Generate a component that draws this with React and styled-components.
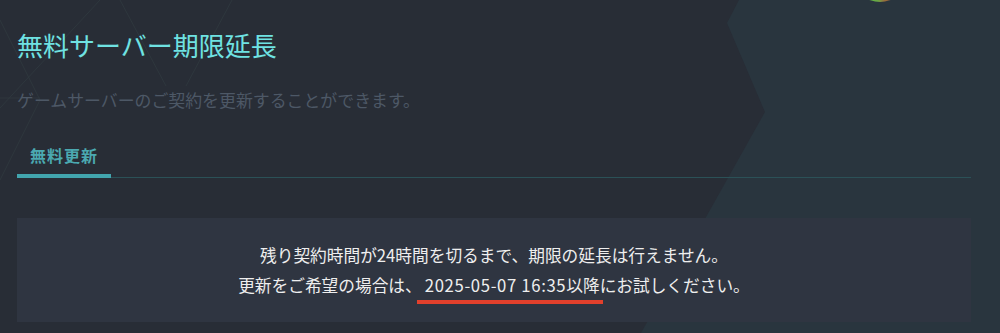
import React from 'react';
import styled, { createGlobalStyle } from 'styled-components';

const GlobalStyle = createGlobalStyle`
  html, body {
    margin: 0;
    padding: 0;
    background: #282d36;
  }
  body {
    font-family: "Noto Sans CJK JP", "Noto Sans", sans-serif;
  }
`;

const BackdropArt = () => (
  <Backdrop viewBox="0 0 1000 333" preserveAspectRatio="none">
    <g stroke="#3a4a4c" strokeWidth="1" opacity="0.35" fill="none">
      <line x1="0" y1="20" x2="40" y2="100" />
      <line x1="100" y1="0" x2="0" y2="108" />
      <line x1="120" y1="0" x2="166" y2="86" />
      <line x1="232" y1="0" x2="186" y2="86" />
      <line x1="0" y1="98" x2="40" y2="98" />
      <line x1="40" y1="100" x2="0" y2="180" />
    </g>
    <polygon
      points="739,0 727,23 765,112 641,333 1000,333 1000,0"
      fill="#29353e"
    />
    <defs>
      <linearGradient id="orb" x1="0" x2="1" y1="0" y2="0">
        <stop offset="0" stopColor="#4fbf4a" />
        <stop offset="0.45" stopColor="#6aa845" />
        <stop offset="0.6" stopColor="#9a6a3c" />
        <stop offset="1" stopColor="#6a4a36" />
      </linearGradient>
    </defs>
    <ellipse cx="880" cy="-20" rx="25" ry="22" fill="url(#orb)" />
  </Backdrop>
);

const App = () => {
  return (
    <Page>
      <GlobalStyle />
      <BackdropArt />
      <Content>
        <Title>無料サーバー期限延長</Title>
        <Subtitle>ゲームサーバーのご契約を更新することができます。</Subtitle>
        <TabList>
          <Tab active>無料更新</Tab>
        </TabList>
        <Notice>
          <NoticeLine>残り契約時間が24時間を切るまで、期限の延長は行えません。</NoticeLine>
          <NoticeLine>
            更新をご希望の場合は、<Marked><DateText>2025-05-07 16:35</DateText>以降</Marked>にお試しください。
          </NoticeLine>
        </Notice>
      </Content>
    </Page>
  );
};

const Page = styled.div`
  position: relative;
  width: 1000px;
  height: 333px;
  overflow: hidden;
  background: #282d36;
`;

const Backdrop = styled.svg`
  position: absolute;
  inset: 0;
  width: 100%;
  height: 100%;
`;

const Content = styled.div`
  position: relative;
  display: flex;
  flex-direction: column;
  padding: 27px 29px 0 17px;
`;

const Title = styled.h1`
  margin: 0;
  font-size: 26px;
  line-height: 36px;
  font-weight: 400;
  color: #6fe2e2;
`;

const Subtitle = styled.p`
  margin: 25px 0 0;
  font-size: 16.9px;
  line-height: 24px;
  color: #4d5866;
`;

const TabList = styled.div`
  display: flex;
  margin-top: 31px;
  border-bottom: 1px solid #2b5157;
`;

const Tab = styled.div`
  padding: 0 13px 7px;
  margin-bottom: -1px;
  font-size: 16px;
  line-height: 24px;
  font-weight: 700;
  letter-spacing: 1px;
  color: #4ba9b1;
  border-bottom: 4px solid ${({ active }) => (active ? '#42a5ae' : 'transparent')};
`;

const Notice = styled.div`
  margin-top: 40px;
  padding: 22px 0;
  background: #2f3541;
  text-align: center;
`;

const NoticeLine = styled.p`
  margin: 0;
  font-size: 16.7px;
  line-height: 30px;
  color: #eeeeee;
`;

const Marked = styled.span`
  position: relative;
  margin-left: 3px;

  &::after {
    content: '';
    position: absolute;
    left: -8px;
    right: -3px;
    bottom: -7px;
    height: 4px;
    background: #e2402c;
  }
`;

const DateText = styled.span`
  letter-spacing: 0.65px;
`;

export default App;
